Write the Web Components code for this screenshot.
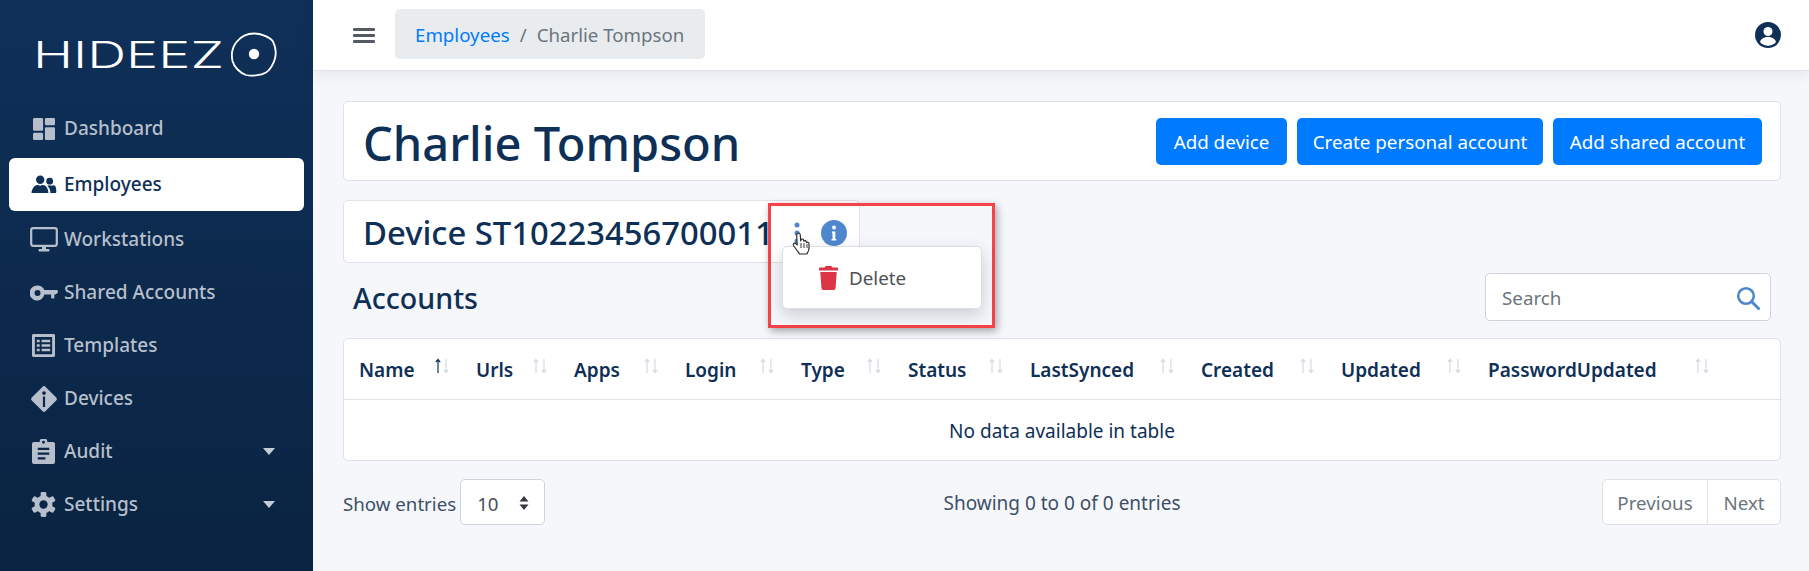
<!DOCTYPE html>
<html lang="en"><head><meta charset="utf-8"><title>Charlie Tompson</title>
<style>
html,body{margin:0;padding:0;height:571px;overflow:hidden;background:#f6f7fb;font-family:"Noto Sans","Open Sans",sans-serif;color:#0e2f56}
</style></head><body>
<hd-app>
  <hd-sidebar slot="side">
    <hd-nav label="Dashboard"><svg viewBox="0 0 24 24" width="22" height="22"><rect x="0" y="0" width="11" height="14" rx="1.5"/><rect x="13" y="0" width="11" height="8" rx="1.5"/><rect x="0" y="16" width="11" height="8" rx="1.5"/><rect x="13" y="10" width="11" height="14" rx="1.5"/></svg></hd-nav>
    <hd-nav label="Employees" active><svg viewBox="0 0 26 20" width="26" height="19"><circle cx="9" cy="5" r="4.4"/><circle cx="19" cy="6.5" r="3.6"/><path d="M0.5 19c-.6 0 -.7-.6 -.6-1.2C.8 13.5 3.5 10.5 6 10.5c1.2 0 2 .7 3 .7s1.8-.7 3-.7c2.5 0 5.2 3 5.6 7.3.1.6 0 1.2-.6 1.2z"/><path d="M19.5 19c.3-.5.3-1 .1-1.8-.4-2.2-1.5-4.3-3.1-5.5.6-.6 1.4-.9 2.5-.9.9 0 1.3.4 2.2.4s1.3-.4 2.2-.4c1.7 0 2.5 3 2.6 6.5 0 1-.5 1.7-1.3 1.7z"/></svg></hd-nav>
    <hd-nav label="Workstations"><svg viewBox="0 0 28 25" width="28" height="25"><rect x="1.2" y="1.2" width="25.6" height="17.6" rx="2" fill="none" stroke="currentColor" stroke-width="2.2"/><rect x="12" y="19" width="4" height="3.5"/><rect x="8.5" y="22" width="11" height="2.6" rx="1"/></svg></hd-nav>
    <hd-nav label="Shared Accounts"><svg viewBox="0 0 28 16" width="28" height="16"><path fill-rule="evenodd" d="M7.5 0.5a7.5 7.5 0 0 1 6.9 4.6H27a1 1 0 0 1 .8.4V8l-2.6 1.6h-.8v3a1 1 0 0 1-1 1h-1.3a1 1 0 0 1-1-1v-3h-6.700A7.500 7.500 0 1 1 7.500 .5zM7.500 5a3 3 0 1 0 0 6 3 3 0 0 0 0-6z"/></svg></hd-nav>
    <hd-nav label="Templates"><svg viewBox="0 0 24 24" width="23" height="23"><path fill-rule="evenodd" d="M1.500 0h21A1.500 1.500 0 0 1 24 1.500v21a1.500 1.500 0 0 1-1.500 1.500h-21A1.500 1.500 0 0 1 0 22.500v-21A1.500 1.500 0 0 1 1.500 0zM3 3v18h18V3z"/><rect x="5" y="6" width="3" height="2.600"/><rect x="10" y="6" width="9" height="2.600"/><rect x="5" y="10.700" width="3" height="2.600"/><rect x="10" y="10.700" width="9" height="2.600"/><rect x="5" y="15.400" width="3" height="2.600"/><rect x="10" y="15.400" width="9" height="2.600"/></svg></hd-nav>
    <hd-nav label="Devices"><svg viewBox="0 0 26 26" width="26" height="26"><path fill-rule="evenodd" d="M11.600.8a2 2 0 0 1 2.800 0l10.800 10.800a2 2 0 0 1 0 2.800L14.400 25.200a2 2 0 0 1-2.800 0L.8 14.400a2 2 0 0 1 0-2.800zM11.900 10.500v10.500h2.200V10.500zM13 5.200a1.900 1.900 0 1 0 0 3.800 1.900 1.900 0 0 0 0-3.800z"/></svg></hd-nav>
    <hd-nav label="Audit" caret><svg viewBox="0 0 24 26" width="23" height="25"><path fill-rule="evenodd" d="M8 3a4 4 0 0 1 8 0h6a2 2 0 0 1 2 2v19a2 2 0 0 1-2 2H2a2 2 0 0 1-2-2V5a2 2 0 0 1 2-2zM12 1.800a1.500 1.500 0 1 0 0 3 1.500 1.500 0 0 0 0-3zM6 9v2.400h12V9zM6 14v2.400h12V14zM6 19v2.400h8V19z"/></svg></hd-nav>
    <hd-nav label="Settings" caret><svg viewBox="0 0 26 26" width="25" height="25"><rect x="10" y="0" width="6" height="26" rx="1.500"/><rect x="10" y="0" width="6" height="26" rx="1.500" transform="rotate(60 13 13)"/><rect x="10" y="0" width="6" height="26" rx="1.500" transform="rotate(120 13 13)"/><circle cx="13" cy="13" r="6.800" fill="none" stroke="currentColor" stroke-width="5"/><circle cx="13" cy="13" r="4.300" fill="#0b2545"/></svg></hd-nav>
  </hd-sidebar>
  <hd-topbar slot="top"></hd-topbar>
  <hd-title-card name="Charlie Tompson">
    <hd-btn style="width:131px">Add device</hd-btn><hd-btn style="width:246px">Create personal account</hd-btn><hd-btn style="width:209px">Add shared account</hd-btn>
  </hd-title-card>
  <hd-device-card name="Device ST10223456700011"></hd-device-card>
  <hd-toolbar heading="Accounts"></hd-toolbar>
  <hd-table></hd-table>
  <hd-tfoot></hd-tfoot>
  <hd-menu slot="over"></hd-menu>
</hd-app>
<script>
function def(name, css, html){
  customElements.define(name, class extends HTMLElement{
    constructor(){super();this.attachShadow({mode:'open'});}
    connectedCallback(){
      const h = typeof html==='function'?html(this):html;
      this.shadowRoot.innerHTML='<style>'+css+'</style>'+h;
    }
  });
}
const FONT='font-family:"Noto Sans","Open Sans",sans-serif;';
def('hd-app',`
:host{display:grid;grid-template-columns:313px 1fr;grid-template-rows:71px 1fr;width:1809px;height:571px;overflow:hidden;position:relative;${FONT}}
.side{grid-row:1/3}
.top{grid-column:2;position:relative;z-index:1}
.main{grid-column:2;padding:30px 28px 0 30px;min-width:0}
`,`<div class="side"><slot name="side"></slot></div><div class="top"><slot name="top"></slot></div><div class="main"><slot></slot></div><slot name="over"></slot>`);

def('hd-sidebar',`
:host{display:block;height:571px;background:linear-gradient(180deg,#0f3059 0%,#0a2341 100%)}
.logo{display:block;padding:32px 0 0 30px;height:70px;box-sizing:content-box}
nav{display:flex;flex-direction:column}
svg{display:block}
`,`<div class="logo"><svg width="251" height="46" viewBox="0 0 251 46">
<text x="3" y="36" fill="#fff" font-family="Inter,'Liberation Sans',sans-serif" font-size="37" font-weight="300" textLength="191" lengthAdjust="spacingAndGlyphs">HIDEEZ</text>
<path d="M224 1.500c7 0 16 3.500 19 8 2.500 5 3.500 11 2 17-1.500 6-5.500 12-9 14-5 3-15 4-20 2.500-6-2-12-8-13.500-14-1.500-7 0-14 4-19 4-5 11-8.500 17.500-8.500z" fill="none" stroke="#fff" stroke-width="1.800"/><circle cx="224" cy="22" r="5.200" fill="#fff"/></svg></div><nav><slot></slot></nav>`);

def('hd-nav',`
:host{display:block;height:53px;margin:0 9px;border-radius:6px;color:#b6bfcb}
:host([active]){background:#fff;color:#0e2f56;margin:3px 9px 2px}
.r{display:flex;align-items:center;height:100%;position:relative}
.i{width:55px;display:flex;justify-content:center;padding-left:14px;box-sizing:border-box;fill:currentColor;flex:none}
.t{font-size:19px;font-weight:500;white-space:nowrap;margin-top:-2px}
.c{position:absolute;right:29px;top:23px;width:0;height:0;border:6.500px solid transparent;border-top:7px solid #c4ccd6;border-bottom:0}
`,el=>`<div class="r"><span class="i"><slot></slot></span><span class="t">${el.getAttribute('label')}</span>${el.hasAttribute('caret')?'<span class="c"></span>':''}</div>`);

def('hd-topbar',`
:host{display:block;height:70px;background:#fff;border-bottom:1px solid #dfe2e8;box-shadow:0 3px 14px rgba(30,40,70,.09)}
.b{display:flex;align-items:center;height:70px;padding:0 28px 0 40px;box-sizing:border-box}
.h{width:22px;height:15px;display:flex;flex-direction:column;justify-content:space-between;margin-right:20px;flex:none}
.h i{display:block;height:3px;background:#555b64;border-radius:1px}
.bc{display:flex;gap:10px;align-items:center;height:50px;margin-top:-2px;padding:0 21px 0 20px;background:#e9ecef;border-radius:5px;font-size:18.700px;color:#6c757d}
.bc a{color:#007bff}
.u{margin-left:auto}
`,`<div class="b"><div class="h"><i></i><i></i><i></i></div><div class="bc"><a>Employees</a><span>/</span><span>Charlie Tompson</span></div>
<svg class="u" width="26" height="26" viewBox="0 0 26 26"><circle cx="13" cy="13" r="13" fill="#0e2f56"/><circle cx="13" cy="9.500" r="4.500" fill="#fff"/><path d="M5 20c1-3.500 4-5 8-5s7 1.500 8 5c-2 2.500-5 3.800-8 3.800s-6-1.300-8-3.800z" fill="#fff"/></svg></div>`);

def('hd-title-card',`
:host{display:block;background:#fff;border:1px solid #dfe2e8;border-radius:5px;box-sizing:border-box;height:80px}
.r{display:flex;align-items:center;justify-content:space-between;height:100%;padding:0 18px 0 19px}
h1{margin:3px 0 0;font-size:47px;font-weight:500;color:#0e2f56;white-space:nowrap}
.b{display:flex;gap:10px}
`,el=>`<div class="r"><h1>${el.getAttribute('name')}</h1><div class="b"><slot></slot></div></div>`);

def('hd-btn',`
:host{display:flex;align-items:center;justify-content:center;box-sizing:border-box;height:47px;padding-top:2px;background:#007bff;color:#fff;border-radius:5px;font-size:18.800px;white-space:nowrap}
`,`<slot></slot>`);

def('hd-device-card',`
:host{display:block;width:517px;height:63px;margin-top:19px;background:#fff;border:1px solid #dfe2e8;border-radius:5px;box-sizing:border-box}
.r{display:flex;align-items:center;height:100%;padding:2px 0 0 19px;box-sizing:border-box}
h2{margin:0;font-size:32.800px;font-weight:500;color:#0e2f56;white-space:nowrap;width:418px;flex:none}
svg{display:block;flex:none}
.k{margin-left:13px}
.inf{margin-left:21px}
`,el=>`<div class="r"><h2>${el.getAttribute('name')}</h2>
<svg class="k" width="6" height="22" viewBox="0 0 6 22"><g fill="#4f87cf"><circle cx="3" cy="3" r="2.500"/><circle cx="3" cy="11" r="2.500"/><circle cx="3" cy="19" r="2.500"/></g></svg>
<svg class="inf" width="26" height="26" viewBox="0 0 26 26"><circle cx="13" cy="13" r="13" fill="#4f87cf"/><circle cx="13" cy="7.500" r="2" fill="#fff"/><path d="M11 11.500h3.300v7.500h1v1.600h-4.800v-1.600h1v-5.900h-.5z" fill="#fff"/></svg></div>`);

def('hd-toolbar',`
:host{display:flex;align-items:center;justify-content:space-between;margin-top:10px;height:48px;padding:0 10px 0 10px}
h3{margin:1px 0 0;font-size:28.600px;font-weight:500;color:#0e2f56}
.s{display:flex;align-items:center;justify-content:space-between;box-sizing:border-box;width:286px;height:48px;padding:0 10px 0 16px;background:#fff;border:1px solid #ced4da;border-radius:5px;color:#6c757d;font-size:18.800px}
.s span{margin-top:2px}
.s svg{margin-top:2px}
`,el=>`<h3>${el.getAttribute('heading')}</h3><div class="s"><span>Search</span>
<svg width="24" height="24" viewBox="0 0 24 24" fill="none" stroke="#4f87cf"><circle cx="10" cy="10" r="7.800" stroke-width="2.600"/><path d="M15.800 15.800L22.500 22.500" stroke-width="3" stroke-linecap="round"/></svg></div>`);

const cols=[['Name',117],['Urls',98],['Apps',111],['Login',116],['Type',107],['Status',122],['LastSynced',171],['Created',140],['Updated',147],['PasswordUpdated',307]];
const arrows=(dark)=>`<svg width="16" height="16" viewBox="0 0 16 16" fill="none" stroke-width="1.200"><path d="M4 15V2M1.800 4.200L4 1.500l2.200 2.700" stroke="${dark?'#0e2f56':'#dbd5e2'}"/><path d="M12 1v13M9.800 11.800L12 14.500l2.200-2.700" stroke="#d5dae3"/></svg>`;
def('hd-table',`
:host{display:block;margin-top:17px;background:#fff;border:1px solid #dfe2e8;border-radius:5px;box-sizing:border-box;height:123px}
.head{display:flex;height:60px;border-bottom:1px solid #dfe2e8}
.th{display:flex;align-items:center;justify-content:space-between;box-sizing:border-box;padding:0 11px 0 15px;font-size:19px;font-weight:600;color:#0e2f56;white-space:nowrap;flex:none}
.th:last-child{padding-right:70px;flex:1}
.th span{margin-top:2px}
.th svg{margin-top:-6px;flex:none}
.body{height:60px;padding-top:2px;box-sizing:border-box;display:flex;align-items:center;justify-content:center;font-size:19px;color:#0e2f56}
`,()=>`<div class="head">${cols.map((c,i)=>`<div class="th" style="width:${c[1]}px"><span>${c[0]}</span>${arrows(i==0)}</div>`).join('')}</div><div class="body">No data available in table</div>`);

def('hd-tfoot',`
:host{display:grid;grid-template-columns:1fr auto 1fr;align-items:center;margin-top:18px;height:46px;font-size:18.700px;color:#3d4f66}
.l{display:flex;align-items:center;gap:4px}
.l>span,.c{margin-top:2px}
.c{font-size:19px}
.sel{display:flex;align-items:center;justify-content:space-between;box-sizing:border-box;width:85px;height:46px;padding:2px 15px 0 16px;background:#fff;border:1px solid #ced4da;border-radius:5px;color:#495057}
.p{display:flex;justify-self:end;height:46px;background:#fff;border:1px solid #dee2e6;border-radius:5px;box-sizing:border-box;color:#6c757d;align-items:center;width:179px;font-size:18.800px}
.p span{height:100%;display:flex;align-items:center;justify-content:center;box-sizing:border-box;padding-top:2px}
.p span:first-child{width:105px;border-right:1px solid #dee2e6}
.p span:last-child{flex:1}
`,`<div class="l"><span>Show entries</span><div class="sel"><span>10</span><svg width="10" height="16" viewBox="0 0 10 16" fill="#343a40"><path d="M5 1l4.500 5.500h-9zM5 15L.5 9.500h9z"/></svg></div></div><div class="c">Showing 0 to 0 of 0 entries</div><div class="p"><span>Previous</span><span>Next</span></div>`);

def('hd-menu',`
:host{display:block;position:absolute;left:768px;top:203px;width:227px;height:125px;box-sizing:border-box;border:3px solid #f44349;box-shadow:2px 3px 8px rgba(0,0,0,.35);z-index:5;pointer-events:none}
.m{position:absolute;left:11px;top:40px;width:200px;height:63px;box-sizing:border-box;background:#fff;border:1px solid #dcdfe4;border-radius:5px;box-shadow:0 6px 16px rgba(30,40,60,.2);display:flex;align-items:center;padding-left:36px;gap:11px;font-size:18.800px;color:#4d5156}
.cur{position:absolute;left:21px;top:26px}
`,`<div class="m"><svg width="19" height="24" viewBox="0 0 19 24" fill="#dc3545"><path d="M6.500 0h6l.8 1.500H18a1 1 0 0 1 1 1V4.500H0V2.500a1 1 0 0 1 1-1h4.700z"/><path d="M1.300 6h16.400L16.600 22a2 2 0 0 1-2 2H4.400a2 2 0 0 1-2-2z"/></svg><span>Delete</span></div>
<svg class="cur" width="20" height="24" viewBox="0 0 20 24"><path d="M5.500 1.500c1-.8 2.500-.3 2.700 1l.5 6.500.4-1.500c1-1 2.300-.5 2.500.7l.2 1c.7-1 2.300-.7 2.500.6l.2.700c.8-.7 2.300-.3 2.400 1 .3 2.600.3 5-.3 6.800-.5 1.600-1.300 2.400-1.700 3.700H7.500c-.8-1.500-2-2.700-3-4.300L1.500 13.500c-.8-1.300.5-3 2-2.200l1.700 1.500L4.700 3c0-.6.300-1.200.8-1.500z" fill="#fff" stroke="#222" stroke-width="1.100" stroke-linejoin="round"/><path d="M9 11v5M12 11v5M15 12v4" stroke="#222" stroke-width=".9"/></svg>`);
</script>
</body></html>
